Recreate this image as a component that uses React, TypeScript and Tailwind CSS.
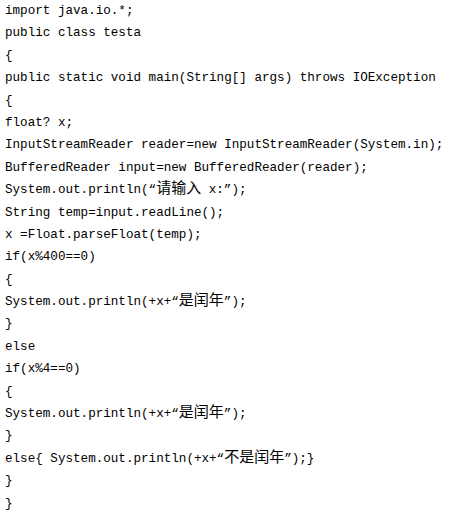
import React from "react";

const lines: string[] = [
  "import java.io.*;",
  "public class testa",
  "{",
  "public static void main(String[] args) throws IOException",
  "{",
  "float? x;",
  "InputStreamReader reader=new InputStreamReader(System.in);",
  "BufferedReader input=new BufferedReader(reader);",
  "System.out.println(“请输入 x:”);",
  "String temp=input.readLine();",
  "x =Float.parseFloat(temp);",
  "if(x%400==0)",
  "{",
  "System.out.println(+x+“是闰年”);",
  "}",
  "else",
  "if(x%4==0)",
  "{",
  "System.out.println(+x+“是闰年”);",
  "}",
  "else{ System.out.println(+x+“不是闰年”);}",
  "}",
  "}",
];

function renderLine(s: string) {
  const parts = s.split(/([\u4e00-\u9fff]+)/);
  return parts.map((p, i) =>
    /[\u4e00-\u9fff]/.test(p) ? (
      <span
        key={i}
        className="text-[15px] leading-[22.4px] h-[22.4px] relative -top-[3px]"
        style={{ fontFamily: '"Noto Sans CJK SC", sans-serif' }}
      >
        {p}
      </span>
    ) : (
      <span key={i} className="whitespace-pre h-[22.4px]">
        {p}
      </span>
    )
  );
}

export default function App() {
  return (
    <div className="w-[452px] h-[513px] bg-white overflow-hidden">
      <div
        className="pl-[5px] pt-0 text-[12.6px] leading-[22.4px] text-black whitespace-pre"
        style={{ fontFamily: '"Liberation Mono", "Noto Sans CJK SC", monospace' }}
      >
        {lines.map((l, i) => (
          <div key={i} className="h-[22.4px] flex items-start">
            {renderLine(l)}
          </div>
        ))}
      </div>
    </div>
  );
}
